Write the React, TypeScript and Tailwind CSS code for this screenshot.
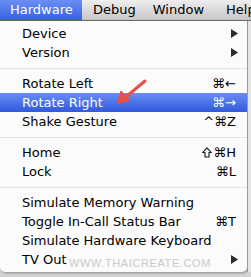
import React from "react";

type Item =
  | { kind: "sep" }
  | { kind: "item"; label: string; shortcut?: string; shift?: boolean; submenu?: boolean; active?: boolean };

const items: Item[] = [
  { kind: "item", label: "Device", submenu: true },
  { kind: "item", label: "Version", submenu: true },
  { kind: "sep" },
  { kind: "item", label: "Rotate Left", shortcut: "⌘←" },
  { kind: "item", label: "Rotate Right", shortcut: "⌘→", active: true },
  { kind: "item", label: "Shake Gesture", shortcut: "^⌘Z" },
  { kind: "sep" },
  { kind: "item", label: "Home", shortcut: "⌘H", shift: true },
  { kind: "item", label: "Lock", shortcut: "⌘L" },
  { kind: "sep" },
  { kind: "item", label: "Simulate Memory Warning" },
  { kind: "item", label: "Toggle In-Call Status Bar", shortcut: "⌘T" },
  { kind: "item", label: "Simulate Hardware Keyboard" },
  { kind: "item", label: "TV Out", submenu: true },
];

const Triangle = ({ white }: { white?: boolean }) => (
  <svg width="7" height="9" viewBox="0 0 7 9" className="-mr-[2px]">
    <path d="M0 0 L7 4.5 L0 9 Z" fill={white ? "#fff" : "#2a2a2a"} />
  </svg>
);

// outlined shift arrow, the emoji font would paint it red
const ShiftIcon = () => (
  <svg width="10" height="11" viewBox="0 0 10 11" className="mr-[1px]">
    <path d="M5 0.8 L9.3 5.5 L7 5.5 L7 10 L3 10 L3 5.5 L0.7 5.5 Z" fill="none" stroke="#111" strokeWidth="1.1" strokeLinejoin="round" />
  </svg>
);

export default function App() {
  return (
    <div className="relative w-[251px] h-[277px] overflow-hidden bg-[#d4d4d4] font-['DejaVu_Sans',sans-serif] text-[13px] text-black">
      {/* Menu bar */}
      <div className="flex h-[21px] items-stretch border-b border-[#6f6f6f] bg-linear-to-b from-[#eeeeee] to-[#c6c6c6]">
        <div className="flex w-[82px] shrink-0 items-center bg-linear-to-b from-[#6a8ff3] to-[#3760e3] pl-[10px] text-white">
          Hardware
        </div>
        <div className="flex shrink-0 items-center pl-[11px]">Debug</div>
        <div className="flex shrink-0 items-center pl-[17px]">Window</div>
        <div className="flex shrink-0 items-center pl-[22px]">Help</div>
      </div>

      {/* Dropdown */}
      <div className="flex">
        <div className="w-[247px] rounded-b-[5px] bg-[#fbfbfb] pt-[3px] pb-[3px] shadow-[1px_1px_3px_rgba(0,0,0,0.35)]">
          {items.map((it, i) =>
            it.kind === "sep" ? (
              <div key={i} className="flex h-[12px] items-center">
                <div className="h-px w-full bg-[#e2e2e2]" />
              </div>
            ) : (
              <div
                key={i}
                className={
                  it.active
                    ? "flex h-[19px] items-center justify-between bg-linear-to-b from-[#6a8cf0] to-[#3158de] pl-[22px] pr-[11px] text-white"
                    : "flex h-[19px] items-center justify-between pl-[22px] pr-[11px]"
                }
              >
                <span>{it.label}</span>
                {it.shortcut && (
                  <span className="flex items-center">
                    {it.shift && <ShiftIcon />}
                    {it.shortcut}
                  </span>
                )}
                {it.submenu && <Triangle white={it.active} />}
              </div>
            )
          )}
        </div>
        <div className="flex-1 border-l border-[#9a9a9a] bg-[#e6e6e6]" />
      </div>

      {/* Watermark */}
      <div className="absolute left-[69px] top-[255px] font-['Liberation_Sans',sans-serif] text-[11px] tracking-[0.6px] text-[#c9c9c9]">
        WWW.THAICREATE.COM
      </div>

      {/* Red arrow */}
      <svg className="absolute left-0 top-0" width="251" height="277" viewBox="0 0 251 277">
        <line x1="145" y1="81" x2="127" y2="96" stroke="#ea4f46" strokeWidth="3" strokeLinecap="round" />
        <path d="M117 104 L121 91 L130 100 Z" fill="#ea4f46" stroke="#ea4f46" strokeWidth="1" strokeLinejoin="round" />
      </svg>
    </div>
  );
}
